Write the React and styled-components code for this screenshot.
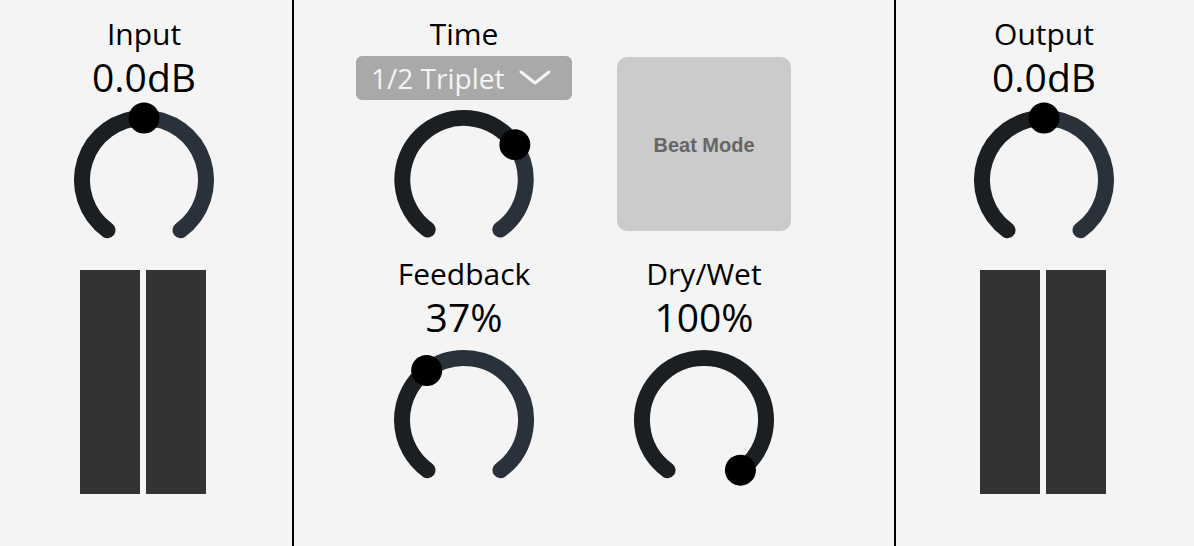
import React from "react";
import styled, { createGlobalStyle } from "styled-components";

const GlobalStyle = createGlobalStyle`
  html, body {
    margin: 0;
    padding: 0;
    background: #f4f4f4;
  }
  body {
    font-family: "Open Sans", "Noto Sans", sans-serif;
  }
`;

const Frame = styled.div`
  width: 1194px;
  height: 546px;
  display: grid;
  grid-template-columns: 292px 2px 600px 2px 298px;
  background: #f4f4f4;
  overflow: hidden;
`;

const Divider = styled.div`
  background: #000;
  height: 100%;
`;

const SidePanel = styled.div`
  display: flex;
  flex-direction: column;
  align-items: center;
  padding-top: 19px;
  padding-right: ${(props) => props.shift}px;
`;

const CenterPanel = styled.div`
  display: grid;
  grid-template-columns: 240px 240px;
  grid-template-rows: 240px auto;
  padding: 19px 70px 0 50px;
`;

const Column = styled.div`
  display: flex;
  flex-direction: column;
  align-items: center;
`;

const Label = styled.div`
  font-size: 30px;
  line-height: 30px;
  color: #000;
  white-space: nowrap;
`;

const Value = styled.div`
  font-size: 39px;
  line-height: 40px;
  margin-top: 8px;
  color: #000;
  white-space: nowrap;
`;

const KnobSvg = styled.svg`
  display: block;
  width: 160px;
  height: 160px;
  margin-top: ${(props) => props.gap}px;
`;

const Dropdown = styled.div`
  width: 216px;
  height: 44px;
  margin-top: 7px;
  box-sizing: border-box;
  padding: 0 0 0 15px;
  display: flex;
  align-items: center;
  gap: 15px;
  background: #a9a9a9;
  border-radius: 6px;
  color: #f4f4f4;
  font-size: 28px;
`;

const ModeButton = styled.div`
  width: 174px;
  height: 174px;
  margin-top: 38px;
  padding-top: 3px;
  box-sizing: border-box;
  display: flex;
  align-items: center;
  justify-content: center;
  background: #cbcbcb;
  border-radius: 10px;
  color: #666666;
  font-family: "Liberation Sans", Arial, sans-serif;
  font-weight: bold;
  font-size: 20px;
`;

const Meter = styled.div`
  display: flex;
  gap: 6px;
  margin-top: 10px;
  margin-right: 2px;
`;

const MeterBar = styled.div`
  width: 60px;
  height: 224px;
  background: #333333;
`;

const R = 62;
const C = 80;

function point(deg) {
  const a = (deg * Math.PI) / 180;
  return [C + R * Math.sin(a), C - R * Math.cos(a)];
}

function arc(from, to) {
  const [x1, y1] = point(from);
  const [x2, y2] = point(to);
  const large = to - from > 180 ? 1 : 0;
  return `M ${x1} ${y1} A ${R} ${R} 0 ${large} 1 ${x2} ${y2}`;
}

function Knob({ angle, gap = 0 }) {
  const [dx, dy] = point(angle);
  return (
    <KnobSvg viewBox="0 0 160 160" gap={gap}>
      {angle < 144 && (
        <path d={arc(angle, 144)} fill="none" stroke="#29323a" strokeWidth="16" strokeLinecap="round" />
      )}
      {angle > -144 && (
        <path d={arc(-144, angle)} fill="none" stroke="#1b1f22" strokeWidth="16" strokeLinecap="round" />
      )}
      <circle cx={dx} cy={dy} r="15.5" fill="#000" />
    </KnobSvg>
  );
}

function Control({ label, value, angle }) {
  return (
    <Column>
      <Label>{label}</Label>
      <Value>{value}</Value>
      <Knob angle={angle} gap={3} />
    </Column>
  );
}

function Chevron() {
  return (
    <svg width="32" height="16" viewBox="0 0 32 16">
      <path d="M2 2 L16 13 L30 2" fill="none" stroke="#f4f4f4" strokeWidth="3" strokeLinecap="round" strokeLinejoin="round" />
    </svg>
  );
}

export default function App() {
  return (
    <>
      <GlobalStyle />
      <Frame>
        <SidePanel shift={4}>
          <Control label="Input" value="0.0dB" angle={0} />
          <Meter>
            <MeterBar />
            <MeterBar />
          </Meter>
        </SidePanel>
        <Divider />
        <CenterPanel>
          <Column>
            <Label>Time</Label>
            <Dropdown>
              <span>1/2 Triplet</span>
              <Chevron />
            </Dropdown>
            <Knob angle={55.5} />
          </Column>
          <Column>
            <ModeButton>Beat Mode</ModeButton>
          </Column>
          <Control label="Feedback" value="37%" angle={-37} />
          <Control label="Dry/Wet" value="100%" angle={144} />
        </CenterPanel>
        <Divider />
        <SidePanel shift={2}>
          <Control label="Output" value="0.0dB" angle={0} />
          <Meter>
            <MeterBar />
            <MeterBar />
          </Meter>
        </SidePanel>
      </Frame>
    </>
  );
}
